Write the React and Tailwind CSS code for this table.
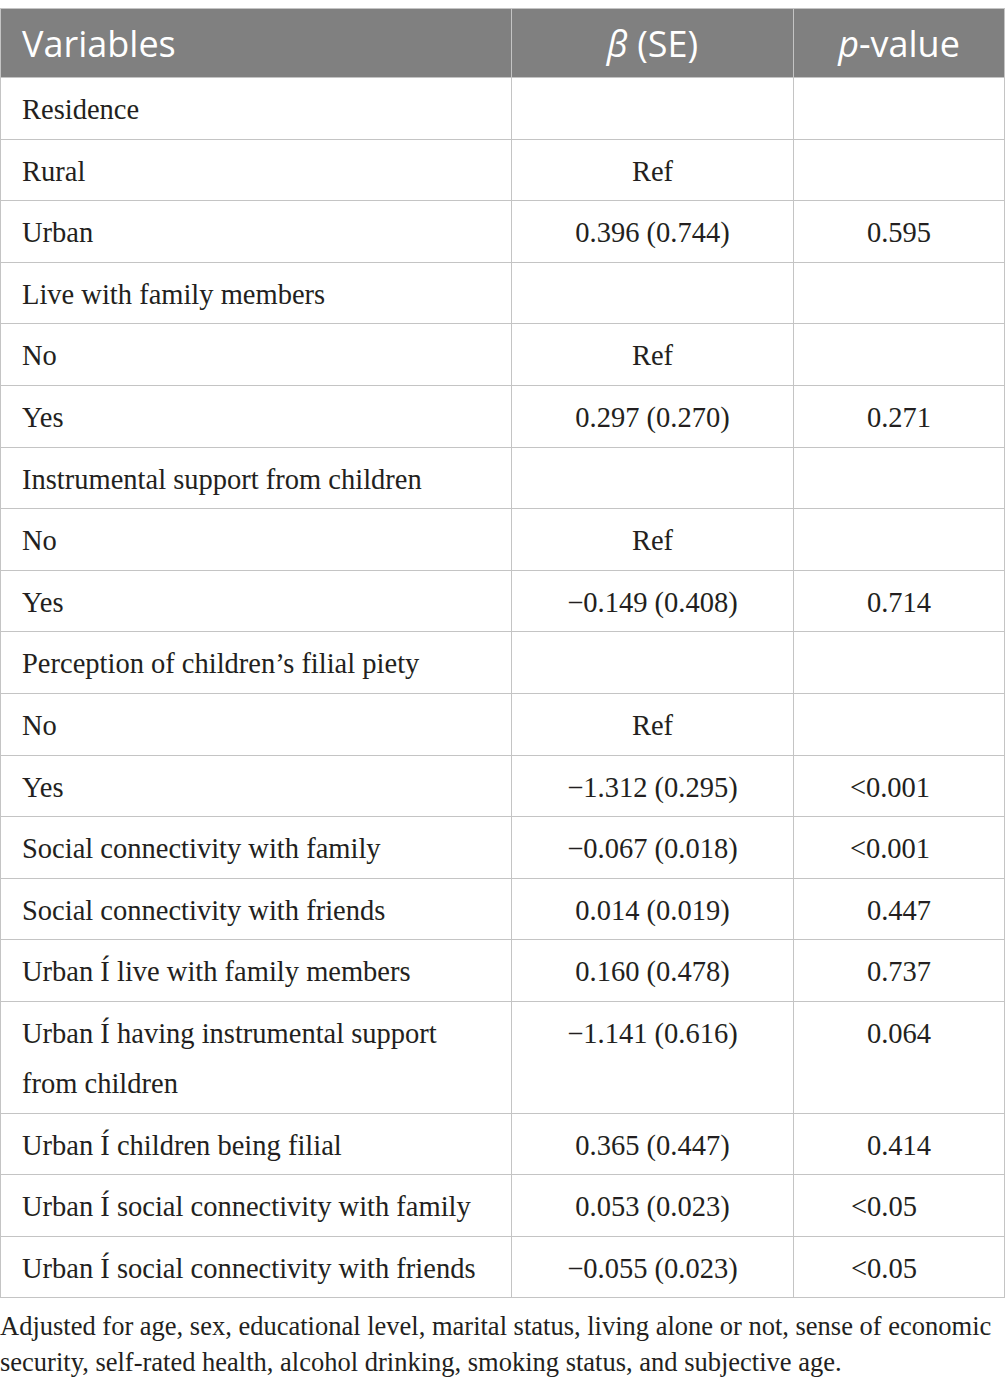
import React from "react";

const rows = [
  ["Residence", "", ""],
  ["Rural", "Ref", ""],
  ["Urban", "0.396 (0.744)", "0.595"],
  ["Live with family members", "", ""],
  ["No", "Ref", ""],
  ["Yes", "0.297 (0.270)", "0.271"],
  ["Instrumental support from children", "", ""],
  ["No", "Ref", ""],
  ["Yes", "\u22120.149 (0.408)", "0.714"],
  ["Perception of children\u2019s filial piety", "", ""],
  ["No", "Ref", ""],
  ["Yes", "\u22121.312 (0.295)", "<0.001"],
  ["Social connectivity with family", "\u22120.067 (0.018)", "<0.001"],
  ["Social connectivity with friends", "0.014 (0.019)", "0.447"],
  ["Urban \u00cd live with family members", "0.160 (0.478)", "0.737"],
  [
    <>
      Urban {"\u00cd"} having instrumental support
      <br />
      from children
    </>,
    "\u22121.141 (0.616)",
    "0.064",
  ],
  ["Urban \u00cd children being filial", "0.365 (0.447)", "0.414"],
  ["Urban \u00cd social connectivity with family", "0.053 (0.023)", "<0.05"],
  ["Urban \u00cd social connectivity with friends", "\u22120.055 (0.023)", "<0.05"],
];

function pClass(v) {
  if (v === "<0.001") return "pr-[18px]";
  if (v === "<0.05") return "pr-[30px]";
  return "";
}

export default function App() {
  return (
    <div className="w-[1005px] bg-white pt-[8px]">
      <table className="w-[1004px] border-collapse table-fixed text-[#231f20]">
        <colgroup>
          <col className="w-[511px]" />
          <col className="w-[282px]" />
          <col className="w-[211px]" />
        </colgroup>
        <thead>
          <tr className="bg-[#808080] h-[69px] text-white font-['Open_Sans',sans-serif] text-[36px] leading-[40px]">
            <th className="border border-[#c4c4c4] text-left font-normal pl-[21px] pt-[2px]">Variables</th>
            <th className="border border-[#c4c4c4] text-center font-normal pt-[2px]">
              <span className="italic">β</span> (SE)
            </th>
            <th className="border border-[#c4c4c4] text-center font-normal pt-[2px]">
              <span className="italic">p</span>-value
            </th>
          </tr>
        </thead>
        <tbody className="font-['Liberation_Serif',serif] text-[28.5px] leading-[50px]">
          {rows.map((r, i) => (
            <tr key={i}>
              <td className="border border-[#c4c4c4] align-top whitespace-nowrap pl-[21px] pt-[7px] pb-[3.6px]">{r[0]}</td>
              <td className="border border-[#c4c4c4] align-top whitespace-nowrap text-center pt-[7px] pb-[3.6px]">{r[1]}</td>
              <td className={"border border-[#c4c4c4] align-top whitespace-nowrap text-center pt-[7px] pb-[3.6px] " + pClass(r[2])}>{r[2]}</td>
            </tr>
          ))}
        </tbody>
      </table>
      <p className="font-['Liberation_Serif',serif] text-[26.5px] leading-[36px] text-[#231f20] pt-[10px]">
        Adjusted for age, sex, educational level, marital status, living alone or not, sense of economic security, self-rated health, alcohol drinking, smoking status, and subjective age.
      </p>
    </div>
  );
}
